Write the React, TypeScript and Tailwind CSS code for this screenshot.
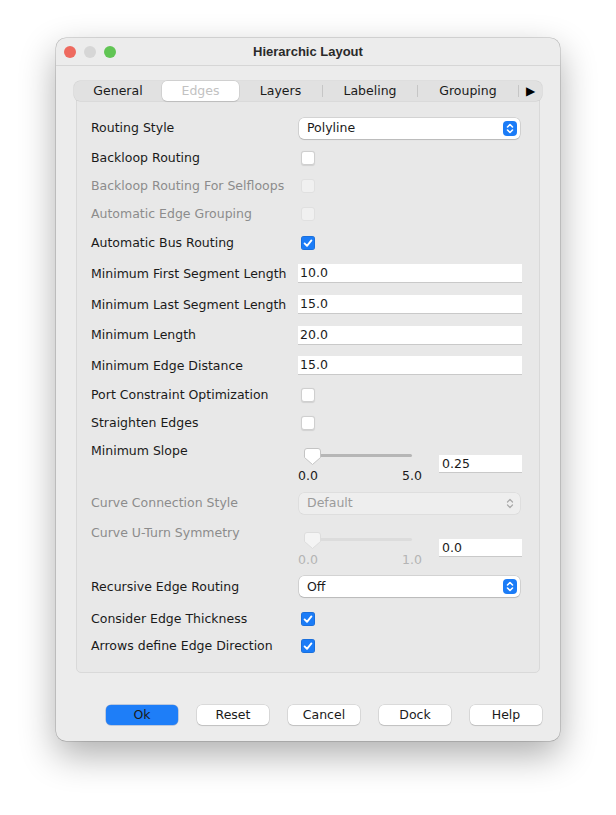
import React from "react";

const Check = ({ checked, disabled }: { checked?: boolean; disabled?: boolean }) => {
  if (checked)
    return (
      <div className="ml-[3px] flex h-[14px] w-[14px] items-center justify-center rounded-[3px] bg-[#1b7cf7] shadow-[inset_0_0_0_0.5px_rgba(0,0,0,0.2)]">
        <svg width="12" height="12" viewBox="0 0 12 12">
          <path d="M2.6 6.4 L5 8.8 L9.4 3.4" fill="none" stroke="white" strokeWidth="1.9" strokeLinecap="round" strokeLinejoin="round" />
        </svg>
      </div>
    );
  return (
    <div
      className={
        disabled
          ? "ml-[3px] h-[14px] w-[14px] rounded-[3px] border border-[#e0e0e0] bg-[#f0f0f0]"
          : "ml-[3px] h-[14px] w-[14px] rounded-[3px] border border-[#cfcfcf] bg-white shadow-[0_0.5px_1px_rgba(0,0,0,0.1)]"
      }
    />
  );
};

const Combo = ({ value, disabled }: { value: string; disabled?: boolean }) => (
  <div
    className={
      "ml-[1px] flex h-[21px] w-[221px] items-center justify-between rounded-[5px] pl-[8px] pr-[3px] " +
      (disabled
        ? "bg-[#eeeeee] text-[#9b9b9b] shadow-[0_0_0_0.5px_rgba(0,0,0,0.08)]"
        : "bg-white text-[#1a1a1a] shadow-[0_0_0_0.5px_rgba(0,0,0,0.18),0_1px_1px_rgba(0,0,0,0.12)]")
    }
  >
    <span>{value}</span>
    {disabled ? (
      <svg width="14" height="15" viewBox="0 0 14 15">
        <path d="M4.5 6 L7 3.5 L9.5 6 M4.5 9 L7 11.5 L9.5 9" fill="none" stroke="#a8a8a8" strokeWidth="1.2" strokeLinecap="round" strokeLinejoin="round" />
      </svg>
    ) : (
      <div className="flex h-[15px] w-[14px] items-center justify-center rounded-[4px] bg-[#1b7cf7]">
        <svg width="14" height="15" viewBox="0 0 14 15">
          <path d="M4.5 6 L7 3.5 L9.5 6 M4.5 9 L7 11.5 L9.5 9" fill="none" stroke="white" strokeWidth="1.6" strokeLinecap="round" strokeLinejoin="round" />
        </svg>
      </div>
    )}
  </div>
);

const Field = ({ value }: { value: string }) => (
  <div className="flex h-[19px] w-[224px] items-center border-b border-[#c9c9c9] bg-white pl-[2px] text-[#1a1a1a]">
    {value}
  </div>
);

const Slider = ({ min, max, value, disabled }: { min: string; max: string; value: string; disabled?: boolean }) => (
  <div className={"flex " + (disabled ? "pt-[14px]" : "pt-[12px]")}>
    <div className="w-[124px]">
      <div className="relative h-[17px]">
        <div className={"absolute left-[6px] top-[6px] h-[3px] w-[108px] rounded-full " + (disabled ? "bg-[#dcdcdc]" : "bg-[#b6b6b6]")} />
        <svg className="absolute left-[6px] top-0" width="17" height="17" viewBox="0 0 17 17">
          <path
            d="M3 0.5 H14 A2.5 2.5 0 0 1 16.5 3 V9.5 L8.5 16.5 L0.5 9.5 V3 A2.5 2.5 0 0 1 3 0.5 Z"
            fill={disabled ? "#f4f4f4" : "white"}
            stroke={disabled ? "#dddddd" : "#c4c4c4"}
            strokeWidth="1"
          />
        </svg>
      </div>
      <div className={"mt-[3px] flex justify-between " + (disabled ? "text-[#b4b4b4]" : "text-[#1a1a1a]")}>
        <span>{min}</span>
        <span>{max}</span>
      </div>
    </div>
    <div className="ml-[17px] mt-[7px] flex h-[18px] w-[83px] items-center border-b border-[#c9c9c9] bg-white pl-[3px] text-[#1a1a1a]">
      {value}
    </div>
  </div>
);

const Row = ({
  label,
  h,
  disabled,
  top,
  children,
}: {
  label: string;
  h: string;
  disabled?: boolean;
  top?: boolean;
  children?: React.ReactNode;
}) => (
  <div className={"grid grid-cols-[207px_1fr] " + h + (top ? " items-start" : " items-center")}>
    <div className={"whitespace-nowrap " + (disabled ? "text-[#8c8c8c]" : "text-[#1a1a1a]") + (top ? " pt-[7px]" : "")}>{label}</div>
    <div className="flex items-center">{children}</div>
  </div>
);

const Btn = ({ label, primary }: { label: string; primary?: boolean }) => (
  <div
    className={
      "flex h-[20px] w-[72px] items-center justify-center rounded-[5px] text-[#1a1a1a] " +
      (primary
        ? "bg-[#1e7ef8] shadow-[0_0_0_0.5px_rgba(0,60,160,0.4)]"
        : "bg-white shadow-[0_0_0_0.5px_rgba(0,0,0,0.15),0_1px_1px_rgba(0,0,0,0.12)]")
    }
  >
    {label}
  </div>
);

export default function App() {
  return (
    <div className="h-[815px] w-[616px] bg-white pl-[56px] pt-[38px] font-['DejaVu_Sans',Verdana,sans-serif] text-[12.5px] leading-[16px]">
      <div className="flex h-[703px] w-[504px] flex-col rounded-[10px] bg-[#ececec] shadow-[0_0_0_0.5px_rgba(0,0,0,0.25),0_14px_36px_rgba(0,0,0,0.32)]">
        {/* title bar */}
        <div className="relative flex h-[28px] items-center border-b border-[#d6d6d6] px-[8px]">
          <div className="flex gap-[8px]">
            <div className="h-[12px] w-[12px] rounded-full bg-[#ee6a5f]" />
            <div className="h-[12px] w-[12px] rounded-full bg-[#d6d6d6]" />
            <div className="h-[12px] w-[12px] rounded-full bg-[#61c554]" />
          </div>
          <div className="absolute inset-x-0 text-center font-['Liberation_Sans',Arial,sans-serif] text-[13px] font-bold text-[#2a2a2a]">
            Hierarchic Layout
          </div>
        </div>

        {/* tabs */}
        <div className="relative z-10 ml-[18px] mt-[15px] flex h-[20px] w-[468px] items-center rounded-[6px] bg-[#e1e1e1] text-[#1a1a1a] shadow-[0_0_0_0.5px_rgba(0,0,0,0.12)]">
          <div className="w-[88px] text-center">General</div>
          <div className="flex h-[20px] w-[77px] items-center justify-center rounded-[5px] bg-white text-[#c2c2c2] shadow-[0_0_0_0.5px_rgba(0,0,0,0.12),0_1px_1px_rgba(0,0,0,0.08)]">
            Edges
          </div>
          <div className="w-[83px] text-center">Layers</div>
          <div className="h-[12px] w-px bg-[#c6c6c6]" />
          <div className="w-[94px] text-center">Labeling</div>
          <div className="h-[12px] w-px bg-[#c6c6c6]" />
          <div className="w-[100px] text-center">Grouping</div>
          <div className="h-[12px] w-px bg-[#c6c6c6]" />
          <div className="flex-1 text-center text-[12px] text-black">▶</div>
        </div>

        {/* pane */}
        <div className="-mt-[10px] ml-[20px] w-[464px] rounded-[5px] border border-[#d9d9d9] bg-[#e8e8e8] pb-[16px] pl-[14px] pr-[17px] pt-[21px]">
          <Row label="Routing Style" h="h-[30px]">
            <Combo value="Polyline" />
          </Row>
          <Row label="Backloop Routing" h="h-[29px]">
            <Check />
          </Row>
          <Row label="Backloop Routing For Selfloops" h="h-[28px]" disabled>
            <Check disabled />
          </Row>
          <Row label="Automatic Edge Grouping" h="h-[28px]" disabled>
            <Check disabled />
          </Row>
          <Row label="Automatic Bus Routing" h="h-[30px]">
            <Check checked />
          </Row>
          <Row label="Minimum First Segment Length" h="h-[31px]">
            <Field value="10.0" />
          </Row>
          <Row label="Minimum Last Segment Length" h="h-[31px]">
            <Field value="15.0" />
          </Row>
          <Row label="Minimum Length" h="h-[30px]">
            <Field value="20.0" />
          </Row>
          <Row label="Minimum Edge Distance" h="h-[31px]">
            <Field value="15.0" />
          </Row>
          <Row label="Port Constraint Optimization" h="h-[28px]">
            <Check />
          </Row>
          <Row label="Straighten Edges" h="h-[27px]">
            <Check />
          </Row>
          <Row label="Minimum Slope" h="h-[52px]" top>
            <Slider min="0.0" max="5.0" value="0.25" />
          </Row>
          <Row label="Curve Connection Style" h="h-[30px]" disabled>
            <Combo value="Default" disabled />
          </Row>
          <Row label="Curve U-Turn Symmetry" h="h-[53px]" disabled top>
            <Slider min="0.0" max="1.0" value="0.0" disabled />
          </Row>
          <Row label="Recursive Edge Routing" h="h-[31px]">
            <Combo value="Off" />
          </Row>
          <Row label="Consider Edge Thickness" h="h-[33px]">
            <Check checked />
          </Row>
          <Row label="Arrows define Edge Direction" h="h-[21px]">
            <Check checked />
          </Row>
        </div>

        {/* buttons */}
        <div className="mt-[32px] flex gap-[19px] pl-[50px]">
          <Btn label="Ok" primary />
          <Btn label="Reset" />
          <Btn label="Cancel" />
          <Btn label="Dock" />
          <Btn label="Help" />
        </div>
      </div>
    </div>
  );
}
